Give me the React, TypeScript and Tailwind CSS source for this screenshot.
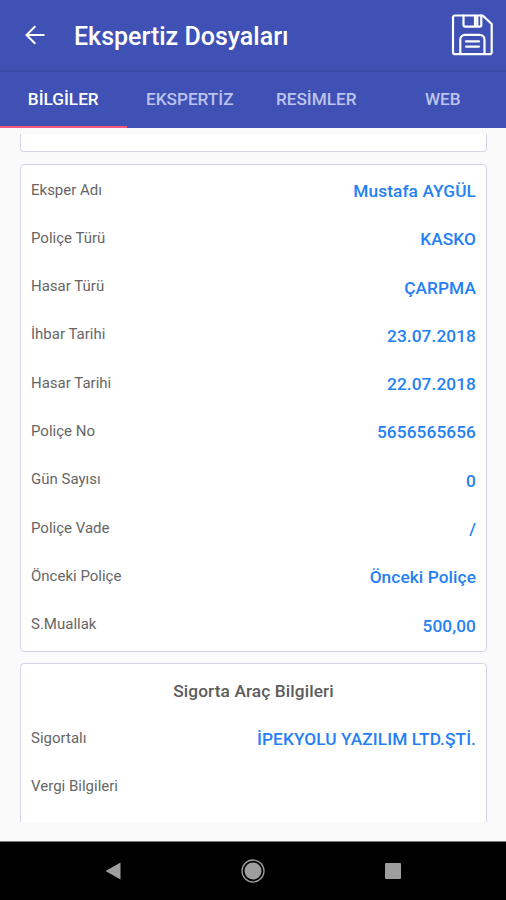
type Row = {
  label: string;
  value?: string;
};

const tabs = ["BİLGİLER", "EKSPERTİZ", "RESİMLER", "WEB"];

const fileRows: Row[] = [
  { label: "Eksper Adı", value: "Mustafa AYGÜL" },
  { label: "Poliçe Türü", value: "KASKO" },
  { label: "Hasar Türü", value: "ÇARPMA" },
  { label: "İhbar Tarihi", value: "23.07.2018" },
  { label: "Hasar Tarihi", value: "22.07.2018" },
  { label: "Poliçe No", value: "5656565656" },
  { label: "Gün Sayısı", value: "0" },
  { label: "Poliçe Vade", value: "/" },
  { label: "Önceki Poliçe", value: "Önceki Poliçe" },
  { label: "S.Muallak", value: "500,00" },
];

const vehicleRows: Row[] = [
  { label: "Sigortalı", value: "İPEKYOLU YAZILIM LTD.ŞTİ." },
  { label: "Vergi Bilgileri" },
];

function InfoRow({ label, value }: Row) {
  return (
    <div className="flex h-[48.3px] justify-between px-2.5">
      <span className="pt-[14.6px] text-[15px] leading-5 text-[#666]">
        {label}
      </span>
      <span className="pt-4 text-[17.3px] leading-5 font-medium tracking-[0.08px] text-[#2480f5]">
        {value}
      </span>
    </div>
  );
}

function BackIcon() {
  return (
    <svg
      width="20"
      height="20"
      viewBox="0 0 20 20"
      fill="none"
      stroke="currentColor"
      strokeWidth="2"
    >
      <path d="M19.5 10H2M10.3 1.2L1.5 10l8.8 8.8" />
    </svg>
  );
}

function SaveIcon() {
  return (
    <svg
      width="42"
      height="42"
      viewBox="0 0 42 42"
      fill="none"
      stroke="currentColor"
      strokeWidth="2.2"
      strokeLinejoin="round"
      strokeLinecap="round"
    >
      <path d="M4 1.5h27.7l9 8.5v28.2a2 2 0 0 1-2 2H4a2 2 0 0 1-2-2V3.5a2 2 0 0 1 2-2z" />
      <path d="M12.5 1.5v9.7a1.5 1.5 0 0 0 1.5 1.5h14.8a1.5 1.5 0 0 0 1.5-1.5V1.5M24 1.5v11M26.3 2v9" />
      <path d="M9.3 40V25.5a4.6 4.6 0 0 1 4.6-4.6h15a4.6 4.6 0 0 1 4.6 4.6V40" />
      <path d="M15 27.4h13M15 32.6h13" />
    </svg>
  );
}

export default function App() {
  return (
    <div className="flex h-[900px] w-[506px] flex-col overflow-hidden bg-[#fafafa] font-['Roboto',sans-serif]">
      <header className="flex h-[70px] shrink-0 items-center bg-[#3f51b5] pr-[13px] pl-[25px] text-white">
        <button type="button" aria-label="Geri">
          <BackIcon />
        </button>
        <h1 className="ml-[29px] flex-1 pt-[3px] text-[25px] leading-8 font-medium">
          Ekspertiz Dosyaları
        </h1>
        <button type="button" aria-label="Kaydet">
          <SaveIcon />
        </button>
      </header>

      <nav className="grid h-[58px] shrink-0 grid-cols-4 border-t-2 border-[#3a4aa8] bg-[#3f51b5]">
        {tabs.map((tab, i) => (
          <button
            key={tab}
            type="button"
            className={
              i === 0
                ? "border-b-2 border-[#f4587f] pt-px text-[17.2px] font-medium text-white"
                : "border-b-2 border-transparent pt-px text-[17.2px] font-medium text-[#bcc3ed]"
            }
          >
            {tab}
          </button>
        ))}
      </nav>

      <main className="mx-5 mt-1.5 mb-[19px] h-[688px] w-[467px] shrink-0 overflow-hidden">
        <section className="h-[18px] rounded-b-[4px] border border-t-0 border-[#d3d4e8] bg-white" />

        <section className="mt-3 h-[488px] rounded-[4px] border border-[#d3d4e8] bg-white">
          {fileRows.map((row) => (
            <InfoRow key={row.label} {...row} />
          ))}
        </section>

        <section className="mt-[11px] h-[200px] rounded-[4px] border border-[#d3d4e8] bg-white">
          <h2 className="h-[49px] pt-[17px] text-center text-[17.3px] leading-5 font-medium tracking-[0.1px] text-[#5c5c5c]">
            Sigorta Araç Bilgileri
          </h2>
          {vehicleRows.map((row) => (
            <InfoRow key={row.label} {...row} />
          ))}
        </section>
      </main>

      <footer className="flex h-[59px] shrink-0 items-center border-t border-[#777] bg-black text-[#9e9e9e]">
        <div className="ml-[105px] flex w-[296px] items-center justify-between">
          <svg width="16" height="18" viewBox="0 0 16 18" fill="currentColor">
            <path d="M15.5.5v17L.5 9z" />
          </svg>
          <svg width="24" height="24" viewBox="0 0 24 24">
            <circle cx="12" cy="12" r="11" fill="none" stroke="currentColor" strokeWidth="1.3" />
            <circle cx="12" cy="12" r="8.5" fill="currentColor" />
          </svg>
          <span className="size-4 rounded-[1px] bg-[#9e9e9e]" />
        </div>
      </footer>
    </div>
  );
}
